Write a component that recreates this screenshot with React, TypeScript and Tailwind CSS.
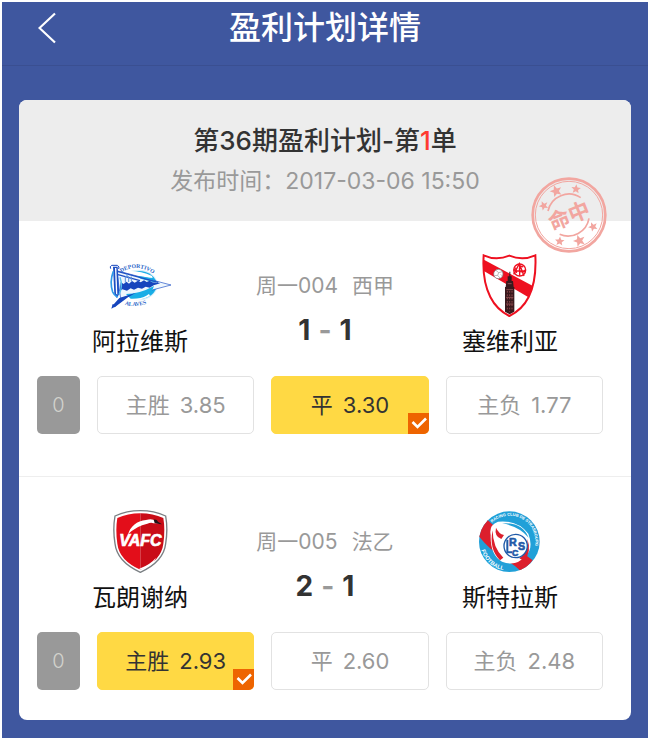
import React from 'react';

interface Option {
    label: string;
    odds: string;
    selected?: boolean;
}

interface Match {
    id: string;
    league: string;
    home: string;
    away: string;
    homeScore: number;
    awayScore: number;
    handicap: number;
    homeLogo: React.ReactNode;
    awayLogo: React.ReactNode;
    options: Option[];
}

function AlavesLogo() {
    return (
        <svg viewBox="54 12 192 192" className="h-16 w-16" aria-hidden="true">
            <defs>
                <path id="alaves-top" d="M94 68 Q142 36 196 76" />
                <path id="alaves-bottom" d="M104 164 Q140 176 186 154" />
            </defs>
            <ellipse cx="146" cy="105" rx="57" ry="46" fill="#d9effb" />
            <ellipse cx="146" cy="105" rx="54" ry="42" fill="#19aee6" />
            <path d="M88 66 Q140 56 186 78 L188 84 L92 74Z" fill="#fff" />
            <path d="M92 150 Q140 158 180 138 L176 130 L100 142Z" fill="#fff" />
            <path d="M80 62 L243 105 L92 145Z" fill="#eef6fd" stroke="#1d4fc4" strokeWidth="2" />
            <path d="M108 132 q40 0 84-24 q-12 40-70 38Z" fill="#19aee6" />
            <path d="M140 78 q40 0 58 20 l-46-12Z" fill="#19aee6" />
            <path d="M82 64 L205 97 M84 74 L150 92" stroke="#1d4fc4" strokeWidth="4" />
            <path d="M92 97 l9 5 8-7 8 6 9-8 8 5 10-6 8 5 10-6 8 5 9-4 8 5 24 3 -20 6 -12 7 -12-3 -11 6 -12-3 -12 6 -10-4 -11 7 -14-4 -8 5Z" fill="#1645bd" />
            <path d="M106 98 v-18 h10 v16 M124 94 v-14 M111 80 v-8" stroke="#5b91dc" strokeWidth="3" fill="none" />
            <path d="M69 50 h14 l5 82 -8 12 -7-12Z" fill="#1d4fc4" />
            <path d="M75 54 h4 l3 80 -4-3Z" fill="#fff" />
            <path d="M62 56 q-4-6 3-10 h17 q8 4 4 11" fill="none" stroke="#1645bd" strokeWidth="3" />
            <path d="M70 64 q-12 32-2 62 q6 12 16 15" fill="none" stroke="#2f9be8" strokeWidth="5" />
            <path d="M90 82 q10 28-3 52" fill="none" stroke="#54c1ef" strokeWidth="4" />
            <path d="M66 169 L88 144 L138 128 L114 142 L74 172Z" fill="#1645bd" />
            <path d="M64 176 l4-14 12 5Z" fill="#1645bd" />
            <g fill="#2864c8" fontSize="17" fontWeight="700" fontFamily="Liberation Serif, serif">
                <text><textPath href="#alaves-top">DEPORTIVO</textPath></text>
                <text><textPath href="#alaves-bottom">ALAVES</textPath></text>
            </g>
        </svg>
    );
}

const SEVILLA_SHIELD = 'M101 31 Q138 48 178 32 Q218 48 256 31 Q260 108 236 156 Q217 194 178 213 Q140 194 121 156 Q96 108 101 31Z';

function SevillaLogo() {
    return (
        <svg viewBox="84 27 192 192" className="h-16 w-16" aria-hidden="true">
            <defs>
                <clipPath id="sevilla-shield">
                    <path d={SEVILLA_SHIELD} />
                </clipPath>
            </defs>
            <path d={SEVILLA_SHIELD} fill="#fff" />
            <g clipPath="url(#sevilla-shield)">
                <path d="M98 42 L250 124 L238 158 L98 76Z" fill="#ee1020" />
            </g>
            <circle cx="145" cy="87" r="14" fill="#fff" stroke="#777" strokeWidth="2" />
            <path d="M138 76 l8 7 -3 8 -10 1 M146 83 l11-3 M143 91 l7 8 M152 88 l6 6" stroke="#999" strokeWidth="2" fill="none" />
            <circle cx="209" cy="75" r="18" fill="none" stroke="#ee1020" strokeWidth="4" />
            <path d="M191 88 L208 56 L222 93 M195 78 h30 M220 66 q-10-6-12 6 q0 12 16 7 v-5 M197 68 q-8 9 4 15 M209 58 v34" stroke="#ee1020" strokeWidth="4" fill="none" />
            <path d="M178 80 h3 v14 h4 v14 h4 l2 18 h2 v74 l-14 8 -14-8 v-74 h2 l2-18 h4 v-14 h5Z" fill="#38191d" />
            <path d="M173 116 h12 M169 134 h20 M168 157 h22 M168 177 h22" stroke="#b3666a" strokeWidth="2" />
            <path d="M172 138 v55 M179 138 v62 M186 138 v55" stroke="#b85d61" strokeWidth="2" strokeDasharray="5 5" />
            <path d={SEVILLA_SHIELD} fill="none" stroke="#ee1020" strokeWidth="6" />
        </svg>
    );
}

function ValenciennesLogo() {
    return (
        <svg viewBox="54 33 192 192" className="h-16 w-16" aria-hidden="true">
            <path d="M75 51 Q110 35 151 35 Q192 35 227 51 Q234 90 227 134 Q221 188 151 220 Q81 188 75 134 Q68 90 75 51Z" fill="#fff" stroke="#7a7f83" strokeWidth="4" />
            <path d="M82 57 Q113 43 151 43 V212 Q88 184 82 134 Q76 92 82 57Z" fill="#e30e1a" />
            <path d="M151 43 Q189 43 220 57 Q226 92 220 134 Q214 184 151 212Z" fill="#c90c17" />
            <path d="M114 106 Q126 68 168 63 Q188 58 196 66 L207 73 L190 73 Q184 69 172 74 Q140 80 114 106Z" fill="#fff" />
            <path d="M191 62 q10-2 13 6 l12 8 -8-1 -14-3Z" fill="#1f1517" />
            <path d="M148 209 Q182 196 198 176 Q190 202 148 213Z" fill="#fff" />
            <text
                x="151"
                y="140"
                textAnchor="middle"
                fill="#fff"
                stroke="#fff"
                strokeWidth="2"
                fontSize="48"
                fontWeight="700"
                fontStyle="italic"
                fontFamily="Liberation Sans, sans-serif"
            >
                VAFC
            </text>
        </svg>
    );
}

function StrasbourgLogo() {
    return (
        <svg viewBox="84 33 192 192" className="h-16 w-16" aria-hidden="true">
            <defs>
                <clipPath id="strasbourg-disc">
                    <circle cx="178" cy="128" r="91" />
                </clipPath>
                <path id="strasbourg-top" d="M126 71 A77 77 0 0 1 232 183" />
                <path id="strasbourg-bottom" d="M94 154 A88 88 0 0 0 174 215" />
            </defs>
            <circle cx="178" cy="128" r="91" fill="#21a0d8" />
            <g clipPath="url(#strasbourg-disc)">
                <path d="M88 92 L112 62 Q142 88 168 116 L148 168 Q118 152 80 104Z" fill="#dc1f2d" />
                <path d="M150 180 L216 160 L248 184 L216 222 Q190 190 150 180Z" fill="#dc1f2d" />
            </g>
            <path d="M122 108 Q116 78 144 68 Q202 62 235 104 Q252 148 226 172 Q198 204 156 188 Q120 168 122 108Z" fill="#fff" />
            <path d="M156 73 Q216 68 236 116 Q208 82 156 73Z" fill="#21a0d8" />
            <path d="M128 94 Q128 146 160 176 L150 184 Q116 150 128 94Z" fill="#dc1f2d" />
            <path d="M138 86 Q146 104 162 108 L154 120 Q132 112 138 86Z" fill="#dc1f2d" />
            <path d="M232 120 Q238 158 208 178 L222 186 Q246 158 232 120Z" fill="#dc1f2d" />
            <circle cx="197" cy="141" r="35" fill="#fff" stroke="#1f5aa8" strokeWidth="4" />
            <path d="M172 122 V160 H186" fill="none" stroke="#1f5aa8" strokeWidth="6" />
            <g fill="#1f5aa8" stroke="#1f5aa8" strokeWidth="2" fontWeight="700" fontFamily="Liberation Sans, sans-serif">
                <text x="177" y="142" fontSize="32">R</text>
                <text x="204" y="154" fontSize="32">S</text>
                <text x="186" y="171" fontSize="26">C</text>
            </g>
            <g fill="#fff" fontWeight="700" fontFamily="Liberation Sans, sans-serif">
                <text fontSize="12"><textPath href="#strasbourg-top">RACING CLUB DE STRASBOURG</textPath></text>
                <text fontSize="17"><textPath href="#strasbourg-bottom">FOOTBALL</textPath></text>
            </g>
        </svg>
    );
}

const STAR = 'M0 -13 L3.6 -4.4 L13 -4 L5.8 2 L8 11 L0 6 L-8 11 L-5.8 2 L-13 -4 L-3.6 -4.4Z';

function HitStamp() {
    return (
        <svg viewBox="27 30 240 240" className="absolute right-[22px] top-[75px] h-20 w-20" role="img" aria-label="命中">
            <g fill="none" stroke="#f2a6a0">
                <circle cx="147" cy="150" r="109" strokeWidth="8" />
                <circle cx="147" cy="150" r="101" strokeWidth="3" />
                <path d="M84 138 A64 64 0 0 1 182 98" strokeWidth="5" />
                <path d="M207 160 A64 64 0 0 1 119 208" strokeWidth="5" />
            </g>
            <g fill="#f2a6a0">
                <path d={STAR} transform="translate(108 78) rotate(-20) scale(1.4)" />
                <path d={STAR} transform="translate(168 72) rotate(5) scale(1.1)" />
                <path d={STAR} transform="translate(71 122) rotate(-25) scale(1.1)" />
                <path d={STAR} transform="translate(219 185) rotate(-25) scale(1.1)" />
                <path d={STAR} transform="translate(178 227) rotate(-20) scale(1.4)" />
                <path d={STAR} transform="translate(119 229) rotate(5) scale(1.1)" />
                <text
                    x="147"
                    y="176"
                    textAnchor="middle"
                    fontSize="64"
                    fontWeight="700"
                    fontFamily="Noto Sans CJK SC, sans-serif"
                    transform="rotate(-22 147 152)"
                >
                    命中
                </text>
            </g>
        </svg>
    );
}

const matches: Match[] = [
    {
        id: '周一004',
        league: '西甲',
        home: '阿拉维斯',
        away: '塞维利亚',
        homeScore: 1,
        awayScore: 1,
        handicap: 0,
        homeLogo: <AlavesLogo />,
        awayLogo: <SevillaLogo />,
        options: [
            { label: '主胜', odds: '3.85' },
            { label: '平', odds: '3.30', selected: true },
            { label: '主负', odds: '1.77' },
        ],
    },
    {
        id: '周一005',
        league: '法乙',
        home: '瓦朗谢纳',
        away: '斯特拉斯',
        homeScore: 2,
        awayScore: 1,
        handicap: 0,
        homeLogo: <ValenciennesLogo />,
        awayLogo: <StrasbourgLogo />,
        options: [
            { label: '主胜', odds: '2.93', selected: true },
            { label: '平', odds: '2.60' },
            { label: '主负', odds: '2.48' },
        ],
    },
];

function Team({ name, logo }: { name: string; logo: React.ReactNode }) {
    return (
        <div className="flex flex-1 flex-col items-center gap-2">
            {logo}
            <span className="text-2xl leading-8 text-[#111111]">{name}</span>
        </div>
    );
}

function OptionButton({ label, odds, selected }: Option) {
    return (
        <button
            type="button"
            aria-pressed={!!selected}
            className={`relative flex h-[58px] flex-1 items-center justify-center gap-2.5 rounded-[5px] border text-[22px] ${selected ? 'border-[#ffd944] bg-[#ffd944] text-[#333333]' : 'border-[#e2e2e2] bg-white text-[#999999]'}`}
        >
            <span>{label}</span>
            <span>{odds}</span>
            {selected && (
                <svg viewBox="0 0 21 21" className="absolute -bottom-px -right-px h-[21px] w-[21px] rounded-br-[5px] bg-[#ee6400]" aria-hidden="true">
                    <path d="M4.5 9 L9.5 14 L18 5.5" fill="none" stroke="#fff" strokeWidth="2.6" />
                </svg>
            )}
        </button>
    );
}

function MatchItem({ match }: { match: Match }) {
    return (
        <section className="border-t border-[#eeeeee] pb-[42px] pt-[33px] first:border-t-0 last:pb-[30px]">
            {/* Teams and score */}
            <div className="flex px-[18px]">
                <Team name={match.home} logo={match.homeLogo} />
                <div className="flex w-[164px] flex-col items-center gap-3 whitespace-nowrap pt-4">
                    <div className="flex gap-3.5 text-[21px] leading-8 text-[#999999]">
                        <span>{match.id}</span>
                        <span>{match.league}</span>
                    </div>
                    <div className="flex gap-2 text-[28px] font-bold leading-8 text-[#333333]">
                        <span>{match.homeScore}</span>
                        <span className="text-[#999999]">-</span>
                        <span>{match.awayScore}</span>
                    </div>
                </div>
                <Team name={match.away} logo={match.awayLogo} />
            </div>

            {/* Odds */}
            <div className="mt-[18px] flex gap-[17px] pl-[18px] pr-7">
                <span className="flex h-[58px] w-[43px] items-center justify-center rounded-[5px] bg-[#999999] text-xl font-light text-[#d2d2cd]">
                    {match.handicap}
                </span>
                {match.options.map((option) => (
                    <OptionButton key={option.label} {...option} />
                ))}
            </div>
        </section>
    );
}

export default function App() {
    return (
        <div className="min-h-screen border-2 border-white bg-[#3f579f] pb-[18px] font-['Inter','Noto_Sans_CJK_SC',sans-serif]">
            <header className="flex h-16 items-start border-b border-[#3a4f91] pt-1">
                <button type="button" aria-label="返回" className="flex h-11 w-20 items-center pl-9">
                    <svg viewBox="0 0 20 32" className="h-8 w-5" aria-hidden="true">
                        <path d="M17 1.5 L1.5 16 L17 30.5" fill="none" stroke="#fff" strokeWidth="2.2" />
                    </svg>
                </button>
                <h1 className="flex-1 text-center text-[32px] font-medium leading-[44px] text-white">盈利计划详情</h1>
                <div className="w-20" />
            </header>

            <main className="relative mx-[17px] mt-[34px] rounded-lg bg-white">
                <div className="rounded-t-lg bg-[#ededed] py-5 text-center">
                    <h2 className="text-[26px] font-medium leading-[42px] text-[#333333]">
                        第36期盈利计划-第<span className="text-[#ff3b30]">1</span>单
                    </h2>
                    <p className="text-[23px] leading-[39px] text-[#999999]">发布时间：2017-03-06 15:50</p>
                </div>
                <div>
                    {matches.map((match) => (
                        <MatchItem key={match.id} match={match} />
                    ))}
                </div>
                <HitStamp />
            </main>
        </div>
    );
}
